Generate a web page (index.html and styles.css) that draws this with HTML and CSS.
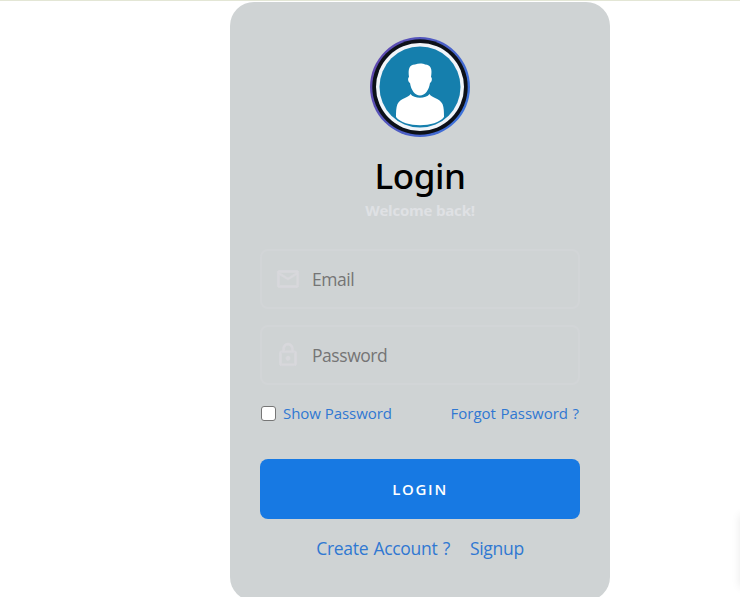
FILE: index.html
```html
<!DOCTYPE html>
<html lang="en">
<head>
<meta charset="utf-8">
<title>Login</title>
<link rel="stylesheet" href="styles.css">
</head>
<body>
<main class="card">
  <div class="avatar">
    <svg viewBox="0 0 100 100" width="100" height="100" aria-hidden="true">
      <defs>
        <linearGradient id="ring" x1="0" y1="0.3" x2="1" y2="0.7">
          <stop offset="0" stop-color="#6047ad"/>
          <stop offset="1" stop-color="#3b74dc"/>
        </linearGradient>
      </defs>
      <circle cx="50" cy="50" r="50" fill="url(#ring)"/>
      <circle cx="50" cy="50" r="47.7" fill="#0d1119"/>
      <circle cx="50" cy="50" r="44" fill="#f1f5fa"/>
      <circle cx="50" cy="50" r="40.5" fill="#157fad"/>
      <path fill="#fff" d="M39 40C38 32 39 28 45 27.500C49 26 53 26.500 55 27.500C61 28 62.500 32 61 40C62.500 41 62 45 60 46C59 53 55 58.500 50 58.500C45 58.500 41 53 40 46C38 45 37.500 41 39 40Z"/>
      <path fill="#fff" d="M40.500 57C44 62 56 62 59.500 57C61 60.500 70 61.500 72.500 67C74 70.500 74 76 74 80C66 91 34 91 26 80C26 76 26 70.500 27.500 67C30 61.500 39 60.500 40.500 57Z"/>
    </svg>
  </div>
  <h1 class="title">Login</h1>
  <p class="subtitle">Welcome back!</p>
  <form class="form">
    <label class="field">
      <svg class="icon" viewBox="0 0 24 24" aria-hidden="true"><path d="M22 6c0-1.100-.9-2-2-2H4c-1.100 0-2 .9-2 2v12c0 1.100.9 2 2 2h16c1.100 0 2-.9 2-2V6zm-2 0l-8 5-8-5h16zm0 12H4V8l8 5 8-5v10z"/></svg>
      <input class="input" type="email" placeholder="Email">
    </label>
    <label class="field">
      <svg class="icon" viewBox="0 0 24 24" aria-hidden="true"><path d="M18 8h-1V6c0-2.760-2.240-5-5-5S7 3.240 7 6v2H6c-1.100 0-2 .9-2 2v10c0 1.100.9 2 2 2h12c1.100 0 2-.9 2-2V10c0-1.100-.9-2-2-2zM9 6c0-1.660 1.340-3 3-3s3 1.340 3 3v2H9V6zm9 14H6V10h12v10zm-6-3c1.100 0 2-.9 2-2s-.9-2-2-2-2 .9-2 2 .9 2 2 2z"/></svg>
      <input class="input" type="password" placeholder="Password">
    </label>
    <div class="options">
      <label class="show"><input class="check" type="checkbox"><span>Show Password</span></label>
      <a class="forgot">Forgot Password ?</a>
    </div>
    <button class="submit" type="button">LOGIN</button>
  </form>
  <div class="links"><a class="create">Create Account ?</a><a class="signup">Signup</a></div>
</main>
<div class="edge"><div class="edge-shadow"></div></div>
</body>
</html>
```
FILE: styles.css
```css
* { box-sizing: border-box; }
body {
  margin: 0;
  height: 597px;
  overflow: hidden;
  background: #fff;
  border-top: 1px solid #e3e6d5;
  font-family: "Open Sans", "Noto Sans", sans-serif;
}
.card {
  width: 380px;
  height: 599px;
  margin: 1px 0 0 230px;
  padding: 35px 30px;
  border-radius: 24px;
  background: #cfd3d4;
  display: flex;
  flex-direction: column;
  align-items: center;
}
.avatar, .avatar svg { display: block; width: 100px; height: 100px; }
.title {
  margin: 15px 0 0;
  font-size: 35px;
  line-height: 48px;
  font-weight: 500;
  font-family: "Noto Sans", sans-serif;
  letter-spacing: -0.4px;
  color: #000;
}
.subtitle {
  margin: 0;
  font-size: 15px;
  line-height: 20px;
  font-weight: 700;
  letter-spacing: -0.2px;
  color: #dfe1e4;
}
.form { width: 320px; margin-top: 29px; }
.field {
  display: flex;
  align-items: center;
  height: 60px;
  margin-bottom: 16px;
  padding-left: 13px;
  border: 2px solid #d2d5d7;
  border-radius: 8px;
}
.icon {
  width: 26px;
  height: 26px;
  fill: #d8d8dc;
  stroke: #d8d8dc;
  stroke-width: 0.5px;
  flex: none;
}
.input {
  width: 240px;
  margin-left: 11px;
  padding: 0;
  border: 0;
  outline: 0;
  background: transparent;
  font: 17.5px/24px "Open Sans", sans-serif;
  letter-spacing: -0.45px;
}
.input::placeholder { color: #757575; opacity: 1; }
.options {
  display: flex;
  justify-content: space-between;
  align-items: center;
  height: 24px;
  font-size: 15px;
  color: #3078d2;
  padding-right: 1px;
}
.show { display: flex; align-items: center; letter-spacing: -0.05px; }
.check {
  appearance: none;
  width: 15px;
  height: 15px;
  margin: 0 7px 0 1px;
  border: 1px solid #767676;
  border-radius: 3px;
  background: #fff;
}
.forgot { word-spacing: 0.6px; }
.submit {
  display: block;
  width: 320px;
  height: 60px;
  margin-top: 34px;
  padding: 0;
  border: 0;
  border-radius: 8px;
  background: #1779e3;
  color: #fff;
  font: 600 15px/20px "Open Sans", sans-serif;
  letter-spacing: 1.7px;
}
.links {
  display: flex;
  gap: 20px;
  margin-top: 16px;
  font-size: 17.5px;
  line-height: 26px;
  letter-spacing: -0.3px;
  color: #3078d2;
}
.create { word-spacing: 1px; }
.edge {
  position: absolute;
  right: 0;
  top: 490px;
  width: 20px;
  height: 107px;
  overflow: hidden;
}
.edge-shadow {
  width: 20px;
  height: 72px;
  margin: 25px 0 0 20px;
  box-shadow: 0 0 10px rgba(0, 0, 0, 0.09);
}
```
